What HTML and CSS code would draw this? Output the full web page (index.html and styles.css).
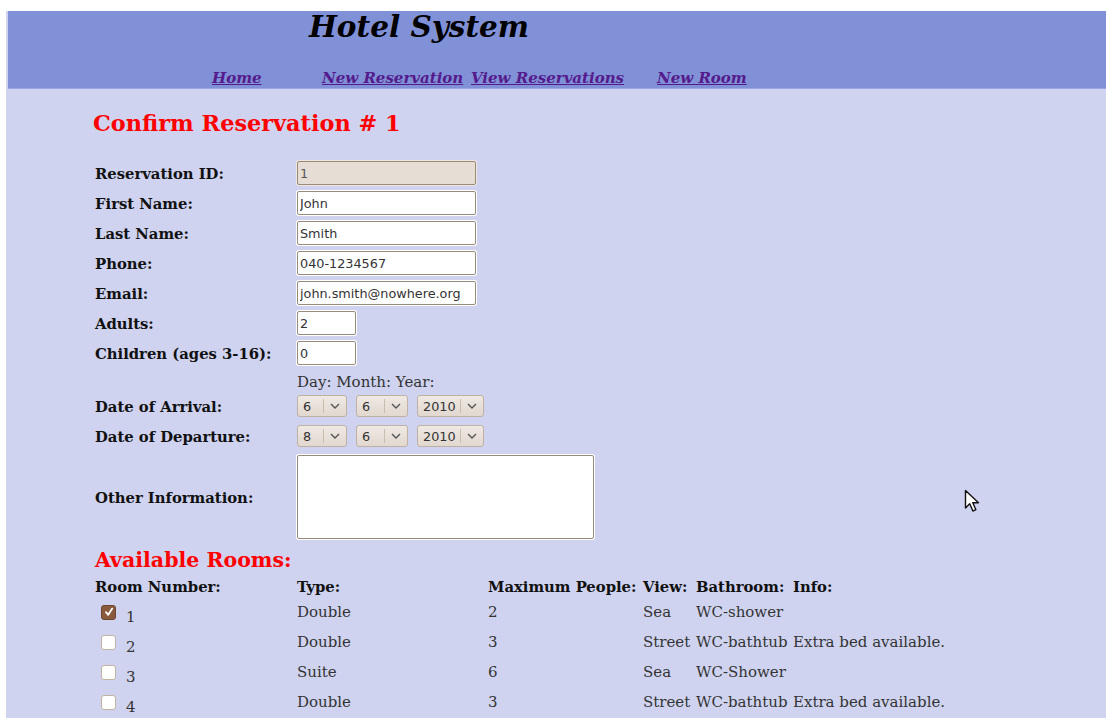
FILE: index.html
```html
<!DOCTYPE html>
<html lang="en">
<head>
<meta charset="utf-8">
<title>Hotel System - Confirm Reservation</title>
<link rel="stylesheet" href="styles.css">
</head>
<body>
<div class="page">
  <header class="banner">
    <h1 class="site-title">Hotel System</h1>
    <nav class="nav">
      <a class="nav-link" href="#">Home</a>
      <a class="nav-link" href="#">New Reservation</a>
      <a class="nav-link" href="#">View Reservations</a>
      <a class="nav-link" href="#">New Room</a>
    </nav>
  </header>

  <main class="content">
    <h2 class="page-title">Confirm Reservation # 1</h2>

    <form class="form">
      <div class="row">
        <label class="label">Reservation ID:</label>
        <input class="field field-wide field-disabled" type="text" value="1" disabled>
      </div>
      <div class="row">
        <label class="label">First Name:</label>
        <input class="field field-wide" type="text" value="John">
      </div>
      <div class="row">
        <label class="label">Last Name:</label>
        <input class="field field-wide" type="text" value="Smith">
      </div>
      <div class="row">
        <label class="label">Phone:</label>
        <input class="field field-wide" type="text" value="040-1234567">
      </div>
      <div class="row">
        <label class="label">Email:</label>
        <input class="field field-wide" type="text" value="john.smith@nowhere.org">
      </div>
      <div class="row">
        <label class="label">Adults:</label>
        <input class="field field-short" type="text" value="2">
      </div>
      <div class="row">
        <label class="label">Children (ages 3-16):</label>
        <input class="field field-short" type="text" value="0">
      </div>
      <div class="row row-hint">
        <span></span>
        <span class="hint">Day: Month: Year:</span>
      </div>
      <div class="row">
        <label class="label">Date of Arrival:</label>
        <div class="date">
          <span class="select sel-day"><span class="sel-val">6</span><span class="sel-arrow"><svg width="10" height="6" viewBox="0 0 10 6"><path d="M1 1l4 4 4-4" fill="none" stroke="#555" stroke-width="1.4"/></svg></span></span>
          <span class="select sel-month"><span class="sel-val">6</span><span class="sel-arrow"><svg width="10" height="6" viewBox="0 0 10 6"><path d="M1 1l4 4 4-4" fill="none" stroke="#555" stroke-width="1.4"/></svg></span></span>
          <span class="select sel-year"><span class="sel-val">2010</span><span class="sel-arrow"><svg width="10" height="6" viewBox="0 0 10 6"><path d="M1 1l4 4 4-4" fill="none" stroke="#555" stroke-width="1.4"/></svg></span></span>
        </div>
      </div>
      <div class="row">
        <label class="label">Date of Departure:</label>
        <div class="date">
          <span class="select sel-day"><span class="sel-val">8</span><span class="sel-arrow"><svg width="10" height="6" viewBox="0 0 10 6"><path d="M1 1l4 4 4-4" fill="none" stroke="#555" stroke-width="1.4"/></svg></span></span>
          <span class="select sel-month"><span class="sel-val">6</span><span class="sel-arrow"><svg width="10" height="6" viewBox="0 0 10 6"><path d="M1 1l4 4 4-4" fill="none" stroke="#555" stroke-width="1.4"/></svg></span></span>
          <span class="select sel-year"><span class="sel-val">2010</span><span class="sel-arrow"><svg width="10" height="6" viewBox="0 0 10 6"><path d="M1 1l4 4 4-4" fill="none" stroke="#555" stroke-width="1.4"/></svg></span></span>
        </div>
      </div>
      <div class="row row-area">
        <label class="label">Other Information:</label>
        <textarea class="field area"></textarea>
      </div>
    </form>

    <h3 class="rooms-title">Available Rooms:</h3>
    <div class="rooms">
      <div class="rooms-row rooms-head">
        <span>Room Number:</span><span>Type:</span><span>Maximum People:</span><span>View:</span><span>Bathroom:</span><span>Info:</span>
      </div>
      <div class="rooms-row">
        <span class="room-no"><span class="check checked"><svg width="10" height="10" viewBox="0 0 10 10"><path d="M2 5.2l2.2 2.6L8.2 1.6" fill="none" stroke="#fff" stroke-width="1.8" stroke-linecap="round" stroke-linejoin="round"/></svg></span><span class="num">1</span></span>
        <span>Double</span><span>2</span><span>Sea</span><span>WC-shower</span><span></span>
      </div>
      <div class="rooms-row">
        <span class="room-no"><span class="check"></span><span class="num">2</span></span>
        <span>Double</span><span>3</span><span>Street</span><span>WC-bathtub</span><span>Extra bed available.</span>
      </div>
      <div class="rooms-row">
        <span class="room-no"><span class="check"></span><span class="num">3</span></span>
        <span>Suite</span><span>6</span><span>Sea</span><span>WC-Shower</span><span></span>
      </div>
      <div class="rooms-row">
        <span class="room-no"><span class="check"></span><span class="num">4</span></span>
        <span>Double</span><span>3</span><span>Street</span><span>WC-bathtub</span><span>Extra bed available.</span>
      </div>
    </div>
  </main>
</div>

<svg class="pointer" width="16" height="24" viewBox="0 0 16 24">
  <path d="M1.5 1.5v17.5l4.2-4.2 3.2 7.2 3-1.3-3.1-7h5.7z" fill="#fff" stroke="#111" stroke-width="1.4" stroke-linejoin="round"/>
</svg>
</body>
</html>
```

FILE: styles.css
```css
html, body {
  margin: 0;
  padding: 0;
  background: #ffffff;
}

body {
  font-family: "DejaVu Serif", serif;
  color: #000;
  overflow: hidden;
}

.page {
  margin: 11px 0 0 6px;
  padding-left: 2px;
  background: #cfd3f0;
  min-height: 720px;
}

/* Top banner with title and navigation */
.banner {
  background: #8091d8;
  height: 77px;
  border-bottom: 1px solid #9aa6e0;
  position: relative;
}

.site-title {
  margin: 0;
  padding: 0 0 0 301px;
  font-size: 29.5px;
  font-weight: bold;
  font-style: italic;
  line-height: 32px;
}

.nav {
  display: grid;
  grid-template-columns: 110px 149px 186px auto;
  padding: 26px 0 0 204px;
  line-height: 18px;
}

.nav-link {
  color: #551a8b;
  font-size: 15px;
  font-weight: bold;
  font-style: italic;
  text-decoration: underline;
}

/* Main content */
.content {
  padding: 20px 0 0 87px;
}

.page-title {
  margin: 0 0 0 -2px;
  color: #ff0000;
  font-size: 22.4px;
  font-weight: bold;
  line-height: 28px;
}

.form {
  margin-top: 21px;
}

.row {
  display: grid;
  grid-template-columns: 202px auto;
  align-items: center;
  height: 30px;
}

.row-hint {
  height: 23px;
  align-items: end;
}

.row-area {
  height: 92px;
}

.label {
  font-size: 14.8px;
  font-weight: bold;
  color: #111;
}

.hint {
  font-size: 15px;
  color: #333;
  line-height: 18px;
}

.field {
  box-sizing: border-box;
  height: 24px;
  margin: 0;
  padding: 0 2px;
  border: 1px solid #978b7c;
  border-radius: 2px;
  background: #fff;
  box-shadow: 0 0 0 1px #ffffff;
  font-family: "DejaVu Sans", sans-serif;
  font-size: 12.8px;
  color: #333;
  justify-self: start;
}

.field-wide {
  width: 179px;
}

.field-short {
  width: 59px;
}

.field-disabled {
  background: #e6ddd4;
  color: #555;
  box-shadow: 0 0 0 1px #efe6de;
}

.area {
  width: 297px;
  height: 84px;
  resize: none;
}

/* Date drop-downs */
.date {
  display: flex;
  gap: 9px;
}

.select {
  box-sizing: border-box;
  display: flex;
  align-items: center;
  height: 22px;
  border: 1px solid #bfb2a4;
  border-radius: 3px;
  background: linear-gradient(#efe9e3, #e1d8cf);
  font-family: "DejaVu Sans", sans-serif;
  font-size: 12.8px;
  color: #333;
}

.sel-day { width: 50px; }
.sel-month { width: 52px; }
.sel-year { width: 67px; }

.sel-val {
  flex: 1;
  padding-left: 5px;
}

.sel-arrow {
  display: flex;
  align-items: center;
  justify-content: center;
  width: 22px;
  height: 14px;
  border-left: 1px solid #c9bdb0;
}

/* Available rooms list */
.rooms-title {
  margin: 4px 0 2px;
  color: #ff0000;
  font-size: 20.5px;
  font-weight: bold;
  line-height: 26px;
}

.rooms-row {
  display: grid;
  grid-template-columns: 202px 191px 155px 53px 97px auto;
  align-items: center;
  height: 30px;
  font-size: 15px;
  color: #333;
  white-space: nowrap;
}

.rooms-head {
  height: 22px;
  font-size: 14.8px;
  font-weight: bold;
  color: #111;
}

.room-no {
  display: flex;
  align-items: center;
  padding-left: 6px;
}

.num {
  margin-left: 10px;
  position: relative;
  top: 5px;
}

.check {
  box-sizing: border-box;
  display: flex;
  align-items: center;
  justify-content: center;
  width: 15px;
  height: 15px;
  border: 1px solid #c2b3a2;
  border-radius: 3px;
  background: #fff;
}

.check.checked {
  background: #8a5a3e;
  border-color: #6e4530;
}

/* Mouse pointer drawn over the page */
.pointer {
  position: absolute;
  left: 964px;
  top: 489px;
}
```
